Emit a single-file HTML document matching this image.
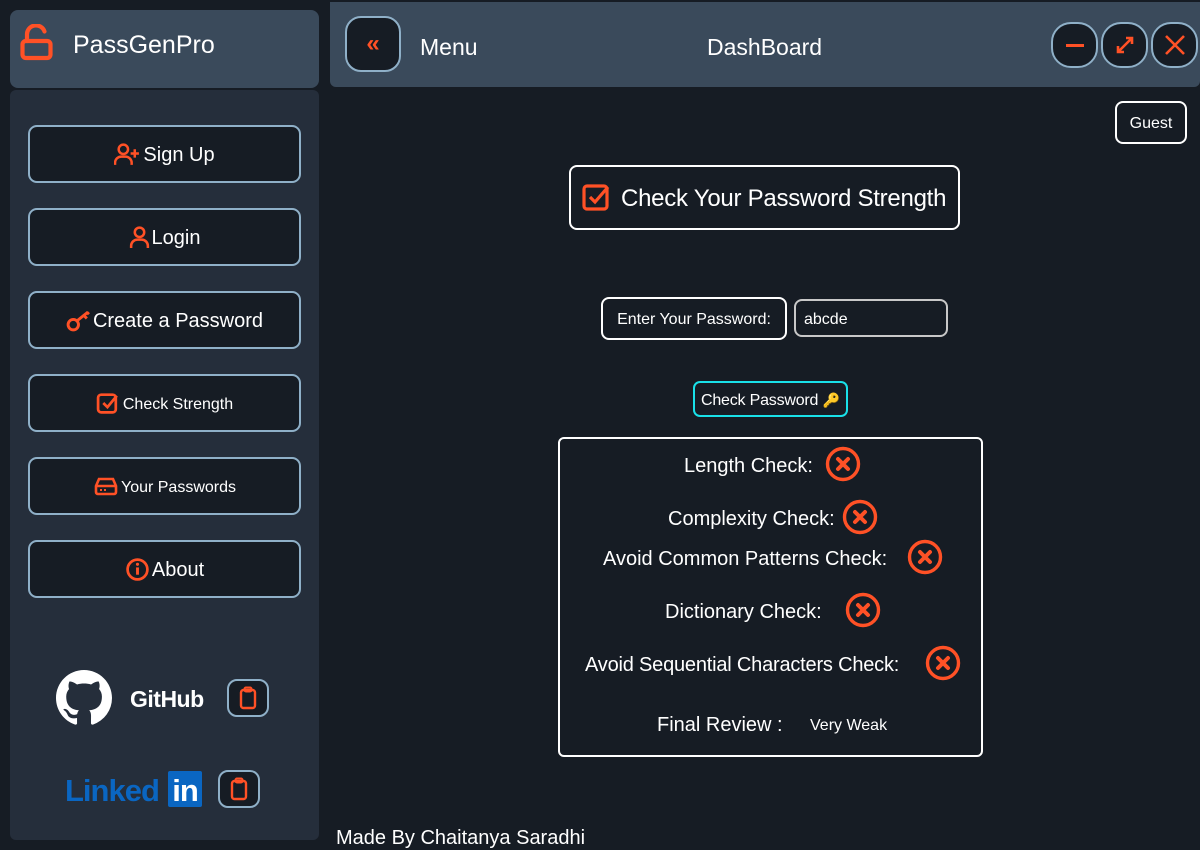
<!DOCTYPE html>
<html><head><meta charset="utf-8"><style>
*{margin:0;padding:0;box-sizing:border-box}
body{width:1200px;height:850px;background:#161c24;font-family:"Liberation Sans","DejaVu Sans",sans-serif;color:#fff;position:relative;overflow:hidden}
.a{position:absolute}
.t{position:absolute;white-space:nowrap;line-height:24px}
.nav{position:absolute;left:28px;width:273px;height:58px;border:2px solid #8fb0c8;border-radius:9px;background:#161c24;display:flex;align-items:center;justify-content:center;font-size:20px;gap:2px;padding-top:3px}
.nav svg{margin-top:-3px}
.cb{position:absolute;border:2px solid #8fb0c8;border-radius:10px;background:#161c24;display:flex;align-items:center;justify-content:center}
</style></head><body>
<div class="a" style="left:10px;top:10px;width:309px;height:78px;background:#3a4a5b;border-radius:8px"></div>
<svg class="a" style="left:19px;top:24px" width="36" height="38" viewBox="0 0 36 38"><path d="M8 17V11a9 9 0 0 1 17.5-3.5" fill="none" stroke="#ff5126" stroke-width="4.2" stroke-linecap="round"/><rect x="3.5" y="17" width="28" height="17" rx="3.5" fill="none" stroke="#ff5126" stroke-width="4.2"/></svg>
<div class="t" style="left:73px;top:33px;font-size:25px">PassGenPro</div>
<div class="a" style="left:10px;top:90px;width:309px;height:750px;background:#252e3b;border-radius:6px"></div>

<div class="nav" style="top:125px"><svg width="27" height="23" viewBox="0 0 26 22"><circle cx="9" cy="6" r="4.5" fill="none" stroke="#ff5126" stroke-width="2.4"/><path d="M1 21v-2a6 6 0 0 1 6-6h4a6 6 0 0 1 6 6v2" fill="none" stroke="#ff5126" stroke-width="2.4"/><path d="M20 6v8M16 10h8" stroke="#ff5126" stroke-width="2.4"/></svg>Sign Up</div>
<div class="nav" style="top:208px"><svg width="21" height="23" viewBox="0 0 20 22"><circle cx="10" cy="6" r="4.5" fill="none" stroke="#ff5126" stroke-width="2.4"/><path d="M2 21v-2a6 6 0 0 1 6-6h4a6 6 0 0 1 6 6v2" fill="none" stroke="#ff5126" stroke-width="2.4"/></svg>Login</div>
<div class="nav" style="top:291px"><svg width="25" height="23" viewBox="0 0 24 22"><circle cx="7" cy="15" r="5" fill="none" stroke="#ff5126" stroke-width="2.8"/><path d="M11 11L21 3M17 6l3 3M20 3l2 2" stroke="#ff5126" stroke-width="2.8"/></svg>Create a Password</div>
<div class="nav" style="top:374px;font-size:16px"><svg width="25" height="24" viewBox="0 0 24 22"><rect x="2" y="3" width="17" height="17" rx="3" fill="none" stroke="#ff5126" stroke-width="2.6"/><path d="M7 11l4 4 9-11" fill="none" stroke="#ff5126" stroke-width="2.6"/></svg>Check Strength</div>
<div class="nav" style="top:457px;font-size:16px"><svg width="26" height="20" viewBox="0 0 26 20"><path d="M3 10l3-7h14l3 7v6a2 2 0 0 1-2 2H5a2 2 0 0 1-2-2z M3 10h20" fill="none" stroke="#ff5126" stroke-width="2.6"/><path d="M7 14h2M11 14h2" stroke="#ff5126" stroke-width="2"/></svg>Your Passwords</div>
<div class="nav" style="top:540px"><svg width="25" height="25" viewBox="0 0 24 24"><circle cx="12" cy="12" r="9.5" fill="none" stroke="#ff5126" stroke-width="2.6"/><path d="M12 10v7" stroke="#ff5126" stroke-width="2.8"/><circle cx="12" cy="7" r="1.5" fill="#ff5126"/></svg>About</div>

<svg class="a" style="left:56px;top:670px" width="56" height="56" viewBox="0 0 16 16"><path fill="#fff" d="M8 0C3.58 0 0 3.58 0 8c0 3.54 2.29 6.530 5.470 7.59.4.07.55-.17.55-.38 0-.19-.01-.82-.01-1.49-2.01.37-2.53-.49-2.69-.94-.09-.23-.48-.94-.82-1.130-.28-.15-.68-.52-.01-.53.63-.01 1.080.58 1.230.82.72 1.210 1.870.87 2.330.66.07-.52.28-.87.51-1.070-1.78-.2-3.640-.89-3.640-3.950 0-.87.31-1.590.82-2.150-.08-.2-.36-1.020.08-2.120 0 0 .67-.21 2.2.82.64-.18 1.320-.27 2-.27.68 0 1.360.09 2 .27 1.530-1.040 2.2-.82 2.2-.82.44 1.1.16 1.920.08 2.120.51.56.82 1.270.82 2.150 0 3.070-1.870 3.750-3.650 3.950.29.25.54.73.54 1.480 0 1.070-.01 1.930-.01 2.2 0 .21.15.46.55.38A8.013 8.013 0 0016 8c0-4.420-3.580-8-8-8z"/></svg>
<div class="t" style="left:130px;top:687px;font-size:23px;font-weight:bold;letter-spacing:-0.5px">GitHub</div>
<div class="cb" style="left:227px;top:679px;width:42px;height:38px"><svg width="18" height="24" viewBox="0 0 18 24"><rect x="2" y="4" width="14" height="18" rx="2.5" fill="none" stroke="#ff5126" stroke-width="2.4"/><rect x="5.5" y="1.5" width="7" height="4" rx="1.5" fill="none" stroke="#ff5126" stroke-width="2"/></svg></div>
<div class="t" style="left:65px;top:774px;font-size:31px;font-weight:bold;color:#0a66c2;letter-spacing:-1px;line-height:34px">Linked</div>
<div class="a" style="left:168px;top:771px;width:34px;height:36px;background:#0a66c2;border-radius:2px;color:#fff;font-weight:bold;font-size:31px;line-height:40px;text-align:center;letter-spacing:-1px">in</div>
<div class="cb" style="left:218px;top:770px;width:42px;height:38px"><svg width="18" height="24" viewBox="0 0 18 24"><rect x="2" y="4" width="14" height="18" rx="2.5" fill="none" stroke="#ff5126" stroke-width="2.4"/><rect x="5.5" y="1.5" width="7" height="4" rx="1.5" fill="none" stroke="#ff5126" stroke-width="2"/></svg></div>

<div class="a" style="left:330px;top:2px;width:870px;height:85px;background:#3a4a5b;border-radius:0 0 6px 6px"></div>
<div class="cb" style="left:345px;top:16px;width:56px;height:56px;border-radius:16px;font-size:24px;color:#ff5126;font-weight:bold">«</div>
<div class="t" style="left:420px;top:35px;font-size:23px">Menu</div>
<div class="t" style="left:707px;top:35px;font-size:23px">DashBoard</div>
<div class="cb" style="left:1051px;top:22px;width:47px;height:46px;border-radius:20px"><div style="width:18px;height:3px;background:#ff5126"></div></div>
<div class="cb" style="left:1101px;top:22px;width:47px;height:46px;border-radius:20px"><svg width="22" height="22" viewBox="0 0 22 22"><path d="M4 18L18 4M12 4h6v6M4 12v6h6" fill="none" stroke="#ff5126" stroke-width="2.6"/></svg></div>
<div class="cb" style="left:1151px;top:22px;width:47px;height:46px;border-radius:20px"><svg width="24" height="24" viewBox="0 0 24 24"><path d="M3 3L21 21M21 3L3 21" stroke="#ff5126" stroke-width="2.6"/></svg></div>

<div class="a" style="left:1115px;top:101px;width:72px;height:43px;border:2px solid #fff;border-radius:8px;font-size:16px;text-align:center;line-height:42px">Guest</div>

<div class="a" style="left:569px;top:165px;width:391px;height:65px;border:2px solid #fff;border-radius:8px"></div>
<svg class="a" style="left:582px;top:182px" width="30" height="30" viewBox="0 0 30 30"><rect x="2" y="4" width="23" height="23" rx="3" fill="none" stroke="#ff5126" stroke-width="3.2"/><path d="M8 15l5 5 13-15" fill="none" stroke="#ff5126" stroke-width="3.2"/></svg>
<div class="t" style="left:621px;top:187px;font-size:24px;letter-spacing:-0.25px">Check Your Password Strength</div>

<div class="a" style="left:601px;top:297px;width:186px;height:43px;border:2px solid #fff;border-radius:8px;font-size:16px;text-align:center;line-height:42px">Enter Your Password:</div>
<div class="a" style="left:794px;top:299px;width:154px;height:38px;border:2px solid #c8c8c8;border-radius:8px;font-size:16px;padding-left:8px;line-height:37px">abcde</div>

<div class="a" style="left:693px;top:381px;width:155px;height:36px;border:2px solid #19e0e8;border-radius:7px;font-size:16px;line-height:35px;padding-left:6px;letter-spacing:-0.2px">Check Password <span style="color:#f0b429;font-size:14px">🔑</span></div>

<div class="a" style="left:558px;top:437px;width:425px;height:320px;border:2px solid #fff;border-radius:6px"></div>
<div class="t" style="left:684px;top:454px;font-size:20px">Length Check:</div>
<div class="t" style="left:668px;top:507px;font-size:20px">Complexity Check:</div>
<div class="t" style="left:603px;top:547px;font-size:20px">Avoid Common Patterns Check:</div>
<div class="t" style="left:665px;top:600px;font-size:20px">Dictionary Check:</div>
<div class="t" style="left:585px;top:653px;font-size:20px;letter-spacing:-0.2px">Avoid Sequential Characters Check:</div>
<div class="t" style="left:657px;top:713px;font-size:20px">Final Review :</div>
<div class="t" style="left:810px;top:714px;font-size:16px">Very Weak</div>
<svg class="a" style="left:0;top:0" width="1200" height="850">
<defs><g id="x"><circle r="15.5" fill="none" stroke="#ff5126" stroke-width="3.4"/><path d="M-5-5L5 5M5-5L-5 5" stroke="#ff5126" stroke-width="4" stroke-linecap="round"/></g></defs>
<use href="#x" x="843" y="464"/><use href="#x" x="860" y="517"/><use href="#x" x="925" y="557"/><use href="#x" x="863" y="610"/><use href="#x" x="943" y="663"/>
</svg>
<div class="t" style="left:336px;top:826px;font-size:20px">Made By Chaitanya Saradhi</div>
</body></html>
